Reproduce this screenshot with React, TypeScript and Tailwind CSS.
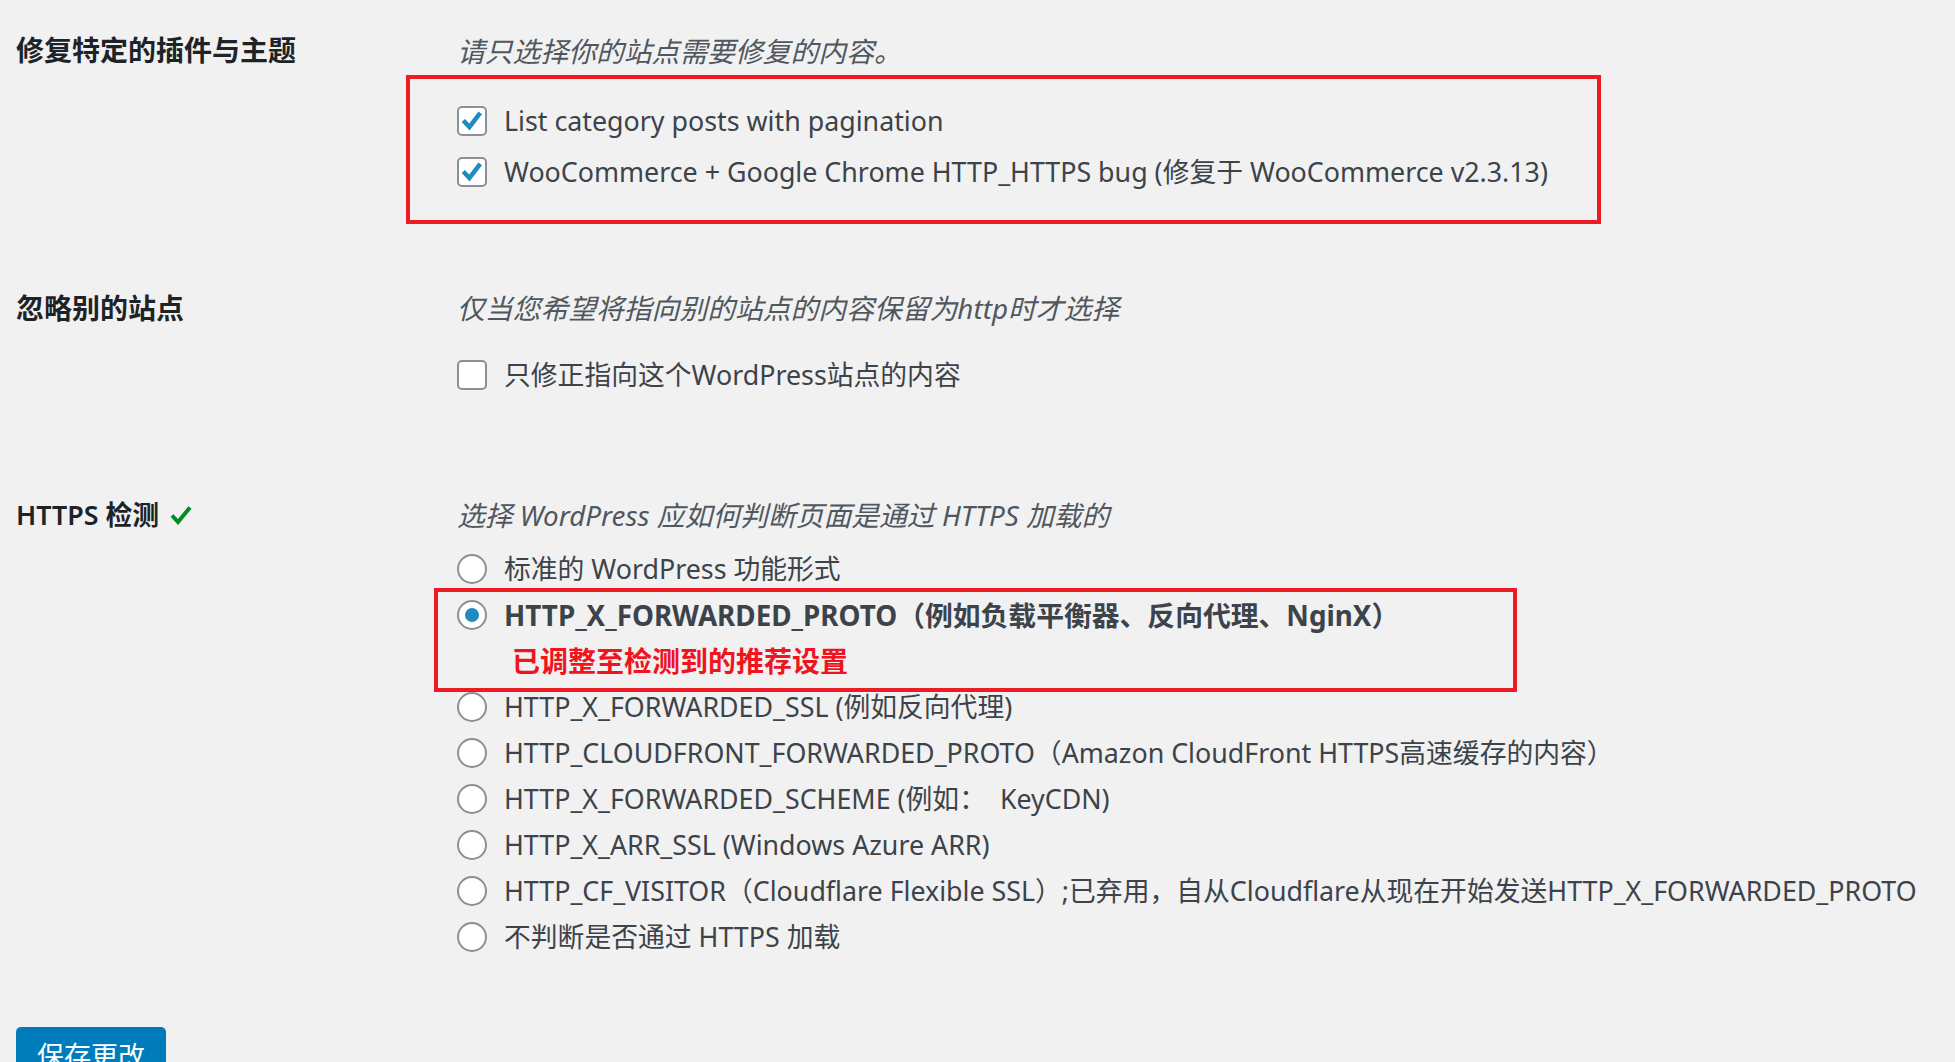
import React from 'react'

const FONT = 'font-["Noto_Sans","Noto_Sans_CJK_SC",sans-serif]'

function CheckBox({ checked }: { checked?: boolean }) {
  return (
    <span className="flex h-[30px] w-[30px] shrink-0 items-center justify-center rounded-[5px] border-2 border-[#8c8f94] bg-white">
      {checked && (
        <svg viewBox="0 0 30 30" className="h-[30px] w-[30px]">
          <path d="M5 14.5 L12 22 L24.5 5.5" fill="none" stroke="#1e8cbe" strokeWidth={5.2} strokeLinejoin="miter" />
        </svg>
      )}
    </span>
  )
}

function Radio({ checked }: { checked?: boolean }) {
  return (
    <span className="flex h-[30px] w-[30px] shrink-0 items-center justify-center rounded-full border-2 border-[#8c8f94] bg-white">
      {checked && <span className="h-[14px] w-[14px] rounded-full bg-[#1e8cbe]" />}
    </span>
  )
}

function CheckRow({ checked, children }: { checked?: boolean; children: React.ReactNode }) {
  return (
    <label className="flex h-[40px] items-center gap-[17px] whitespace-nowrap">
      <CheckBox checked={checked} />
      <span>{children}</span>
    </label>
  )
}

function RadioRow({ checked, bold, children }: { checked?: boolean; bold?: boolean; children: React.ReactNode }) {
  return (
    <label className="flex h-[46px] items-center gap-[17px] whitespace-pre">
      <Radio checked={checked} />
      <span className={bold ? 'text-[27.8px] font-bold' : ''}>{children}</span>
    </label>
  )
}

export default function App() {
  return (
    <div className={`min-h-screen overflow-hidden bg-[#f1f1f1] pl-4 pt-[31px] text-[26.8px] leading-[40px] text-[#3c434a] ${FONT}`}>
      {/* 修复特定的插件与主题 */}
      <div className="grid grid-cols-[441px_1fr] items-start">
        <div className="-mt-px text-[28px] font-bold text-[#1d2327]">修复特定的插件与主题</div>
        <div>
          <p className="text-[27.8px] italic text-[#50575e]">请只选择你的站点需要修复的内容。</p>
          <div className="-ml-[51px] mt-[4px] w-[1195px] border-4 border-[#ed1c24] pb-[28px] pl-[47px] pt-[22px]">
            <div className="flex flex-col gap-[11px]">
              <CheckRow checked>List category posts with pagination</CheckRow>
              <CheckRow checked>WooCommerce + Google Chrome HTTP_HTTPS bug (修复于 WooCommerce v2.3.13)</CheckRow>
            </div>
          </div>
        </div>
      </div>

      {/* 忽略别的站点 */}
      <div className="mt-[64px] grid grid-cols-[441px_1fr] items-start">
        <div className="text-[28px] font-bold text-[#1d2327]">忽略别的站点</div>
        <div>
          <p className="text-[27.8px] italic text-[#50575e]">仅当您希望将指向别的站点的内容保留为http时才选择</p>
          <div className="mt-[27px]">
            <CheckRow>只修正指向这个WordPress站点的内容</CheckRow>
          </div>
        </div>
      </div>

      {/* HTTPS 检测 */}
      <div className="mt-[100px] grid grid-cols-[441px_1fr] items-start">
        <div className="flex h-[40px] items-center gap-[11px] text-[#1d2327]">
          <span className="-mt-px font-semibold">HTTPS 检测</span>
          <svg viewBox="0 0 22 20" className="h-[20px] w-[22px]">
            <path d="M2 10.5 L8 17 L20 2.5" fill="none" stroke="#008a20" strokeWidth={4} />
          </svg>
        </div>
        <div>
          <p className="text-[27.8px] italic text-[#50575e]">选择 WordPress 应如何判断页面是通过 HTTPS 加载的</p>
          <div className="mt-[11px] flex flex-col">
            <RadioRow>标准的 WordPress 功能形式</RadioRow>
            <div className="-mb-[8px] -ml-[23px] -mt-[4px] w-[1083px] border-4 border-[#ed1c24] pb-[4px] pl-[19px]">
              <RadioRow checked bold>
                HTTP_X_FORWARDED_PROTO（例如负载平衡器、反向代理、NginX）
              </RadioRow>
              <div className="flex h-[46px] items-center pl-[55px] text-[28px] font-bold text-[#f0141e]">
                已调整至检测到的推荐设置
              </div>
            </div>
            <RadioRow>HTTP_X_FORWARDED_SSL (例如反向代理)</RadioRow>
            <RadioRow>HTTP_CLOUDFRONT_FORWARDED_PROTO（Amazon CloudFront HTTPS高速缓存的内容）</RadioRow>
            <RadioRow>HTTP_X_FORWARDED_SCHEME (例如：  KeyCDN)</RadioRow>
            <RadioRow>HTTP_X_ARR_SSL (Windows Azure ARR)</RadioRow>
            <RadioRow>HTTP_CF_VISITOR（Cloudflare Flexible SSL）;已弃用，自从Cloudflare从现在开始发送HTTP_X_FORWARDED_PROTO</RadioRow>
            <RadioRow>不判断是否通过 HTTPS 加载</RadioRow>
          </div>
        </div>
      </div>

      <button className="mt-[67px] h-[58px] rounded-[5px] bg-[#007cba] px-[21px] text-[27px] leading-[58px] text-white">
        保存更改
      </button>
    </div>
  )
}
